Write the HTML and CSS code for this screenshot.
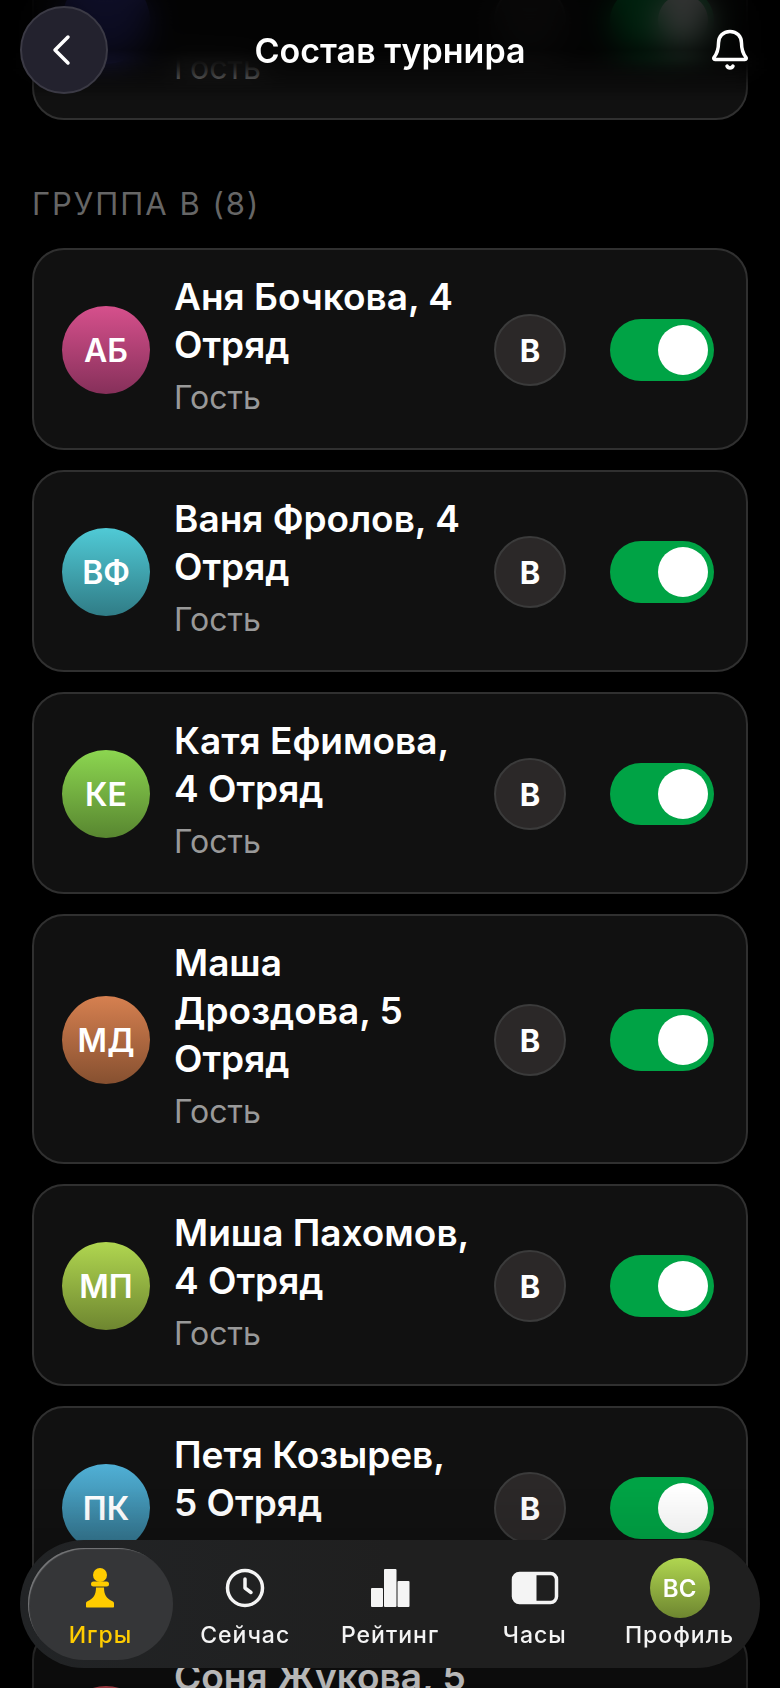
FILE: index.html
```html
<!DOCTYPE html>
<html lang="ru">
  <head>
    <meta charset="UTF-8" />
    <meta name="viewport" content="width=device-width, initial-scale=1.0" />
    <title>Состав турнира</title>
    <link rel="stylesheet" href="styles.css">
  </head>

  <body>
    <header class="header">
      <button class="back" aria-label="Назад">
        <svg width="44" height="44" viewBox="0 0 44 44">
          <path d="M26 9 L13 22 L26 35" />
        </svg>
      </button>
      <h1 class="title">Состав турнира</h1>
      <button class="bell" aria-label="Уведомления">
        <svg width="40" height="44" viewBox="0 0 40 44">
          <path d="M20 3.500c-7 0-11.500 5-11.500 11.500 0 7-1 10-4.500 14.500-.6 1-.2 2 1 2h30c1.200 0 1.600-1 1-2-3.500-4.500-4.500-7.500-4.500-14.500C31.500 8.500 27 3.500 20 3.500z" />
          <path d="M17 38c1 2.500 5 2.500 6 0" />
        </svg>
      </button>
    </header>

    <main class="list">
      <!-- last card of the group above -->
      <div class="card">
        <div class="avatar violet"></div>
        <div class="info">
          <div class="name name-empty"></div>
          <div class="role">Гость</div>
        </div>
        <button class="group" aria-label="Группа"></button>
        <input class="switch" type="checkbox" aria-label="Участвует" checked />
      </div>

      <h2 class="group-title">ГРУППА B (8)</h2>

      <div class="cards">
        <div class="card">
          <div class="avatar pink">АБ</div>
          <div class="info">
            <label class="name" for="p1">Аня Бочкова, 4 Отряд</label>
            <div class="role">Гость</div>
          </div>
          <button class="group">B</button>
          <input class="switch" type="checkbox" id="p1" checked />
        </div>
        <div class="card">
          <div class="avatar cyan">ВФ</div>
          <div class="info">
            <label class="name" for="p2">Ваня Фролов, 4 Отряд</label>
            <div class="role">Гость</div>
          </div>
          <button class="group">B</button>
          <input class="switch" type="checkbox" id="p2" checked />
        </div>
        <div class="card">
          <div class="avatar green">КЕ</div>
          <div class="info">
            <label class="name" for="p3">Катя Ефимова, 4 Отряд</label>
            <div class="role">Гость</div>
          </div>
          <button class="group">B</button>
          <input class="switch" type="checkbox" id="p3" checked />
        </div>
        <div class="card">
          <div class="avatar orange">МД</div>
          <div class="info">
            <label class="name" for="p4">Маша Дроздова, 5 Отряд</label>
            <div class="role">Гость</div>
          </div>
          <button class="group">B</button>
          <input class="switch" type="checkbox" id="p4" checked />
        </div>
        <div class="card">
          <div class="avatar lime">МП</div>
          <div class="info">
            <label class="name" for="p5">Миша Пахомов, 4 Отряд</label>
            <div class="role">Гость</div>
          </div>
          <button class="group">B</button>
          <input class="switch" type="checkbox" id="p5" checked />
        </div>
        <div class="card">
          <div class="avatar blue">ПК</div>
          <div class="info">
            <label class="name" for="p6">Петя Козырев, 5 Отряд</label>
            <div class="role">Гость</div>
          </div>
          <button class="group">B</button>
          <input class="switch" type="checkbox" id="p6" checked />
        </div>
        <div class="card">
          <div class="avatar red">СЖ</div>
          <div class="info">
            <label class="name" for="p7">Соня Жукова, 5 Отряд</label>
            <div class="role">Гость</div>
          </div>
          <button class="group">B</button>
          <input class="switch" type="checkbox" id="p7" checked />
        </div>
      </div>
    </main>

    <div class="fade"></div>

    <nav class="tabs">
      <a class="tab active" href="#games">
        <span class="tab-icon">
          <svg width="40" height="40" viewBox="0 0 40 40">
            <circle cx="20" cy="7" r="7" />
            <rect x="11" y="13.500" width="18" height="5" rx="2.500" />
            <path d="M16 19.500h8c0 7 2.500 11 8 13.500 1.500.6 2 1.200 2 2.500v3c0 .6-.4 1-1 1H7c-.6 0-1-.4-1-1v-3c0-1.300.5-1.900 2-2.500 5.500-2.500 8-6.500 8-13.500z" />
          </svg>
        </span>
        <span class="tab-label">Игры</span>
      </a>
      <a class="tab" href="#now">
        <span class="tab-icon">
          <svg class="line" width="40" height="40" viewBox="0 0 40 40">
            <circle cx="20" cy="20" r="17.500" />
            <path d="M20 11v9l6 4.500" />
          </svg>
        </span>
        <span class="tab-label">Сейчас</span>
      </a>
      <a class="tab" href="#rating">
        <span class="tab-icon">
          <svg width="40" height="40" viewBox="0 0 40 40">
            <rect x="1" y="20" width="12" height="19" rx="1" />
            <rect x="14" y="1" width="12.500" height="38" rx="1" />
            <rect x="27.500" y="13" width="12" height="26" rx="1" />
          </svg>
        </span>
        <span class="tab-label">Рейтинг</span>
      </a>
      <a class="tab" href="#clock">
        <span class="tab-icon">
          <svg class="line" width="48" height="40" viewBox="0 0 48 40">
            <rect x="2.500" y="5.500" width="43" height="29" rx="6" />
            <path class="solid" d="M8 5.500h17.500v29H8c-3 0-5.500-2-5.500-5.500V11c0-3.500 2.500-5.500 5.500-5.500z" />
          </svg>
        </span>
        <span class="tab-label">Часы</span>
      </a>
      <a class="tab" href="#profile">
        <span class="tab-icon"><span class="avatar avatar-small lime">ВС</span></span>
        <span class="tab-label">Профиль</span>
      </a>
    </nav>
  </body>
</html>
```
FILE: styles.css
```css
* {
  box-sizing: border-box;
}

body {
  margin: 0;
  height: 100vh;
  overflow: hidden;
  background: #000;
  color: #fff;
  font-family: Inter, "Noto Sans", sans-serif;
}

button {
  padding: 0;
  border: none;
  background: none;
  color: inherit;
  font-family: inherit;
}

/* header */
.header {
  position: fixed;
  top: 0;
  left: 0;
  right: 0;
  z-index: 2;
  height: 100px;
  padding: 0 30px 0 20px;
  display: flex;
  align-items: center;
  justify-content: space-between;
}

.header::before {
  content: "";
  position: absolute;
  inset: 0;
  z-index: -1;
  background: linear-gradient(rgba(0, 0, 0, 0.8) 50%, transparent);
}

.header::after {
  content: "";
  position: absolute;
  inset: 0 0 8px;
  z-index: -2;
  backdrop-filter: blur(16px);
  mask-image: linear-gradient(#000 65%, transparent);
}

.back {
  display: flex;
  align-items: center;
  justify-content: center;
  width: 88px;
  height: 88px;
  border: 2px solid #3b3a45;
  border-radius: 50%;
  background: #23222e;
}

.back svg,
.bell svg {
  fill: none;
  stroke: #fff;
  stroke-width: 3.5;
  stroke-linecap: round;
  stroke-linejoin: round;
}

.bell {
  display: flex;
}

.title {
  position: absolute;
  left: 0;
  right: 0;
  z-index: -1;
  margin: 0;
  padding-top: 2px;
  text-align: center;
  font-size: 34px;
  font-weight: 600;
  line-height: 48px;
}

/* list, scrolled a bit down */
.list {
  margin-top: -82px;
  padding: 0 32px;
}

.group-title {
  margin: 64px 0 24px;
  color: #666;
  font-size: 31px;
  font-weight: 400;
  line-height: 40px;
  letter-spacing: 2px;
}

.cards {
  display: flex;
  flex-direction: column;
  gap: 20px;
}

.card {
  display: flex;
  align-items: center;
  padding: 23px 32px 21px 28px;
  border: 2px solid #303030;
  border-radius: 32px;
  background: #111;
}

.avatar {
  flex: none;
  display: flex;
  align-items: center;
  justify-content: center;
  width: 88px;
  height: 88px;
  border-radius: 50%;
  font-size: 32px;
  font-weight: 600;
}

.avatar-small {
  width: 60px;
  height: 60px;
  font-size: 24px;
  color: #fff;
}

.pink {
  background: linear-gradient(#d6508c, #86305a);
}
.cyan {
  background: linear-gradient(#50cad6, #307c86);
}
.green {
  background: linear-gradient(#8cd650, #588630);
}
.orange {
  background: linear-gradient(#d68050, #865030);
}
.lime {
  background: linear-gradient(#b0d650, #6e8630);
}
.blue {
  background: linear-gradient(#50b0d6, #306e86);
}
.red {
  background: linear-gradient(#d6505a, #863038);
}
.violet {
  background: linear-gradient(#5050d6, #303086);
}

.info {
  flex: 1;
  min-width: 0;
  margin: 0 20px 0 24px;
}

.name {
  display: block;
  font-size: 37px;
  font-weight: 600;
  line-height: 48px;
}

.name-empty {
  height: 96px;
}

.role {
  color: #999;
  font-size: 32px;
  line-height: 58px;
}

.group {
  flex: none;
  width: 72px;
  height: 72px;
  margin-right: 44px;
  border: 2px solid #3b3b3b;
  border-radius: 50%;
  background: #2b2828;
  font-size: 31px;
  font-weight: 700;
}

.switch {
  appearance: none;
  flex: none;
  display: flex;
  width: 104px;
  height: 62px;
  margin: 0;
  padding: 6px;
  border-radius: 31px;
  background: #333;
}

.switch::before {
  content: "";
  width: 50px;
  height: 50px;
  border-radius: 50%;
  background: #fff;
}

.switch:checked {
  justify-content: flex-end;
  background: #00a345;
}

/* bottom bar */
.fade {
  position: fixed;
  left: 0;
  right: 0;
  bottom: 0;
  height: 200px;
  background: linear-gradient(transparent, rgba(0, 0, 0, 0.3));
}

.tabs {
  position: fixed;
  left: 20px;
  right: 20px;
  bottom: 20px;
  display: flex;
  padding: 8px;
  border-radius: 64px;
  background: linear-gradient(90deg, #222426, #1f1f1f 50%);
}

.tab {
  flex: 1;
  display: flex;
  flex-direction: column;
  align-items: center;
  padding: 10px 0 8px;
  border-radius: 56px;
  color: #f4f4f4;
  text-decoration: none;
}

.tab.active {
  color: #ffcc00;
  background: #353638;
  box-shadow: inset 2px 2px 1px -1px #77787a;
}

.tab-icon {
  display: flex;
  align-items: center;
  justify-content: center;
  height: 60px;
}

.tab-icon svg {
  fill: currentColor;
}

.tab-icon .line {
  fill: none;
  stroke: currentColor;
  stroke-width: 3.5;
  stroke-linecap: round;
  stroke-linejoin: round;
}

.tab-icon .solid {
  fill: currentColor;
  stroke: none;
}

.tab-label {
  font-size: 23px;
  font-weight: 500;
  line-height: 34px;
  letter-spacing: 1px;
}
```
